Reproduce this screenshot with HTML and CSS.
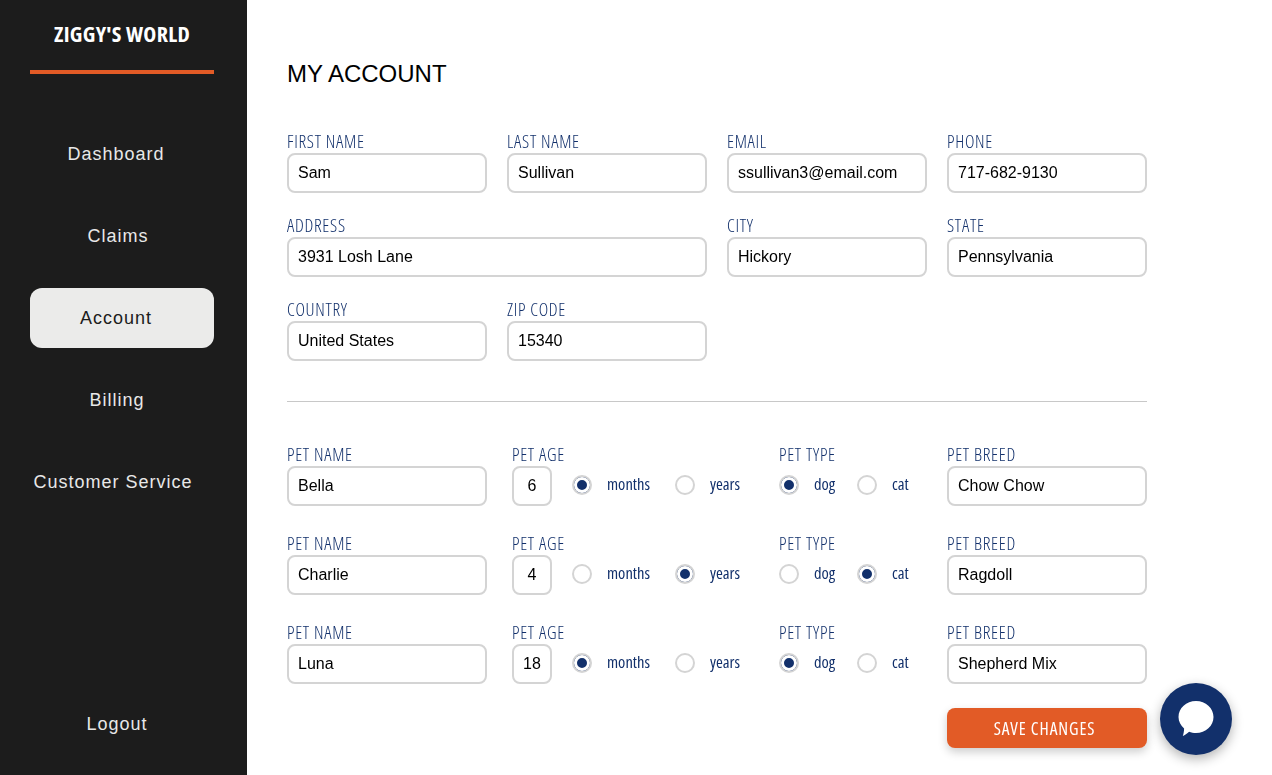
FILE: index.html
```html
<!DOCTYPE html>
<html>
<head>
  <title>My Account</title>
  <link rel="stylesheet" href="styles.css">
</head>
<body>
  <aside class="sidebar">
    <div class="logo">ZIGGY'S WORLD</div>
    <nav class="nav">
      <a class="nav-item">Dashboard</a>
      <a class="nav-item nav-claims">Claims</a>
      <a class="nav-item active">Account</a>
      <a class="nav-item nav-billing">Billing</a>
      <a class="nav-item nav-service">Customer Service</a>
    </nav>
    <a class="nav-item logout">Logout</a>
  </aside>

  <main class="main">
    <h1 class="title">MY ACCOUNT</h1>
    <form class="form">
      <div class="account-grid">
        <div class="field">
          <label>FIRST NAME</label>
          <input type="text" value="Sam">
        </div>
        <div class="field">
          <label>LAST NAME</label>
          <input type="text" value="Sullivan">
        </div>
        <div class="field">
          <label>EMAIL</label>
          <input type="text" value="ssullivan3@email.com">
        </div>
        <div class="field">
          <label>PHONE</label>
          <input type="text" value="717-682-9130">
        </div>
        <div class="field wide">
          <label>ADDRESS</label>
          <input type="text" value="3931 Losh Lane">
        </div>
        <div class="field">
          <label>CITY</label>
          <input type="text" value="Hickory">
        </div>
        <div class="field">
          <label>STATE</label>
          <input type="text" value="Pennsylvania">
        </div>
        <div class="field">
          <label>COUNTRY</label>
          <input type="text" value="United States">
        </div>
        <div class="field">
          <label>ZIP CODE</label>
          <input type="text" value="15340">
        </div>
      </div>

      <hr class="divider">

      <div class="pets">
        <div class="pet-row">
          <div class="field">
            <label>PET NAME</label>
            <input type="text" value="Bella">
          </div>
          <div class="field">
            <label>PET AGE</label>
            <div class="age-line">
              <input class="age" type="text" value="6">
              <label class="radio unit-first"><input type="radio" name="unit1" checked>months</label>
              <label class="radio"><input type="radio" name="unit1">years</label>
            </div>
          </div>
          <div class="field">
            <label>PET TYPE</label>
            <div class="type-line">
              <label class="radio type-first"><input type="radio" name="type1" checked>dog</label>
              <label class="radio"><input type="radio" name="type1">cat</label>
            </div>
          </div>
          <div class="field">
            <label>PET BREED</label>
            <input type="text" value="Chow Chow">
          </div>
        </div>

        <div class="pet-row">
          <div class="field">
            <label>PET NAME</label>
            <input type="text" value="Charlie">
          </div>
          <div class="field">
            <label>PET AGE</label>
            <div class="age-line">
              <input class="age" type="text" value="4">
              <label class="radio unit-first"><input type="radio" name="unit2">months</label>
              <label class="radio"><input type="radio" name="unit2" checked>years</label>
            </div>
          </div>
          <div class="field">
            <label>PET TYPE</label>
            <div class="type-line">
              <label class="radio type-first"><input type="radio" name="type2">dog</label>
              <label class="radio"><input type="radio" name="type2" checked>cat</label>
            </div>
          </div>
          <div class="field">
            <label>PET BREED</label>
            <input type="text" value="Ragdoll">
          </div>
        </div>

        <div class="pet-row">
          <div class="field">
            <label>PET NAME</label>
            <input type="text" value="Luna">
          </div>
          <div class="field">
            <label>PET AGE</label>
            <div class="age-line">
              <input class="age" type="text" value="18">
              <label class="radio unit-first"><input type="radio" name="unit3" checked>months</label>
              <label class="radio"><input type="radio" name="unit3">years</label>
            </div>
          </div>
          <div class="field">
            <label>PET TYPE</label>
            <div class="type-line">
              <label class="radio type-first"><input type="radio" name="type3" checked>dog</label>
              <label class="radio"><input type="radio" name="type3">cat</label>
            </div>
          </div>
          <div class="field">
            <label>PET BREED</label>
            <input type="text" value="Shepherd Mix">
          </div>
        </div>
      </div>

      <div class="actions">
        <button class="save" type="button">SAVE CHANGES</button>
      </div>
    </form>
  </main>

  <button class="chat" type="button" aria-label="Chat">
    <svg width="38" height="38" viewBox="0 1.500 38 38">
      <path fill="#fff" d="M19 2.500C28.700 2.500 36.500 9.600 36.500 18.500C36.500 27.400 28.700 34.500 19 34.500C16.500 34.500 14.200 34 12.100 33.200C9.800 35.400 7 37 5.800 37.500C6.500 35.600 7.100 32.800 7.100 30C3.700 27.100 1.500 23 1.500 18.500C1.500 9.600 9.300 2.500 19 2.500Z"/>
    </svg>
  </button>
</body>
</html>
```

FILE: styles.css
```css
/* Page layout */
* {
  box-sizing: border-box;
}
body {
  display: flex;
  height: 100vh;
  margin: 0;
  overflow: hidden;
  font-family: "Liberation Sans", Arial, sans-serif;
  background-color: #fff;
}

/* Sidebar */
.sidebar {
  display: flex;
  flex-direction: column;
  flex: none;
  width: 247px;
  padding: 0 33px 21px 30px;
  background-color: #1c1c1c;
}
.logo {
  height: 74px;
  padding-top: 19px;
  border-bottom: 4px solid #e25b26;
  color: #fff;
  font-family: "Open Sans", sans-serif;
  font-size: 22px;
  font-stretch: 75%;
  font-weight: 700;
  line-height: 28px;
  letter-spacing: 0.3px;
  text-align: center;
  white-space: nowrap;
}
.nav {
  display: flex;
  flex-direction: column;
  gap: 22px;
  margin-top: 50px;
}
.nav-item {
  display: block;
  height: 60px;
  padding-right: 12px;
  border-radius: 12px;
  color: #e8e8e8;
  font-size: 18px;
  line-height: 60px;
  letter-spacing: 1px;
  text-align: center;
  white-space: nowrap;
}
.nav-item.active {
  background-color: #ebebea;
  color: #1c1c1c;
}
.nav-claims {
  padding-right: 8px;
}
.nav-billing {
  padding-right: 10px;
}
.nav-service {
  padding-right: 18px;
}
.logout {
  margin-top: auto;
  padding-right: 10px;
}

/* Main content */
.main {
  flex: 1;
  padding: 60px 0 0 40px;
}
.title {
  margin: 0 0 42px;
  color: #000;
  font-size: 24px;
  font-weight: 400;
  line-height: 28px;
}
.form {
  width: 860px;
  will-change: transform;
}
.account-grid {
  display: grid;
  grid-template-columns: repeat(4, 200px);
  gap: 21px 20px;
}
.wide {
  grid-column: span 2;
}
.field > label {
  display: block;
  height: 23px;
  color: #12306b;
  font-family: "Open Sans", sans-serif;
  font-size: 18px;
  font-stretch: 75%;
  font-weight: 350;
  line-height: 22px;
  letter-spacing: 0.7px;
}
input[type="text"] {
  display: block;
  width: 100%;
  height: 40px;
  padding: 0 9px;
  border: 2px solid #d4d4d4;
  border-radius: 8px;
  color: #000;
  font-family: "Liberation Sans", Arial, sans-serif;
  font-size: 16px;
}
.divider {
  height: 1px;
  margin: 40px 0 41px;
  border: none;
  background-color: #c8c8c8;
}

/* Pet rows */
.pets {
  display: flex;
  flex-direction: column;
  gap: 26px;
}
.pet-row {
  display: grid;
  grid-template-columns: 200px 242px 143px 200px;
  gap: 25px;
}
.age-line,
.type-line {
  display: flex;
  align-items: center;
  height: 40px;
}
input.age {
  flex: none;
  width: 40px;
  padding: 0;
  text-align: center;
}
.radio {
  display: flex;
  align-items: center;
  padding-bottom: 6px;
  color: #12306b;
  font-family: "Open Sans", sans-serif;
  font-size: 16.500px;
  font-stretch: 75%;
  font-weight: 500;
}
.radio input {
  flex: none;
  width: 20px;
  height: 20px;
  margin: 4px 15px 0 0;
  border: 2px solid #d4d4d4;
  border-radius: 50%;
  background-color: #fff;
  appearance: none;
}
.radio input:checked {
  background-color: #12306b;
  box-shadow: inset 0 0 0 3px #fff;
}
.unit-first {
  width: 103px;
  margin-left: 20px;
}
.type-first {
  width: 78px;
}

/* Buttons */
.actions {
  display: flex;
  justify-content: flex-end;
  margin-top: 24px;
}
.save {
  width: 200px;
  height: 40px;
  padding: 0 5px 0 0;
  border: none;
  border-radius: 8px;
  background-color: #e25b26;
  box-shadow: 0 4px 10px rgba(0, 0, 0, 0.2);
  color: #fff;
  font-family: "Open Sans", sans-serif;
  font-size: 17.500px;
  font-stretch: 75%;
  letter-spacing: 0.9px;
}
.chat {
  position: absolute;
  left: 1160px;
  top: 683px;
  display: flex;
  align-items: center;
  justify-content: center;
  width: 72px;
  height: 72px;
  padding: 0;
  border: none;
  border-radius: 50%;
  background-color: #12306b;
  box-shadow: 0 4px 12px rgba(0, 0, 0, 0.3);
}
```
